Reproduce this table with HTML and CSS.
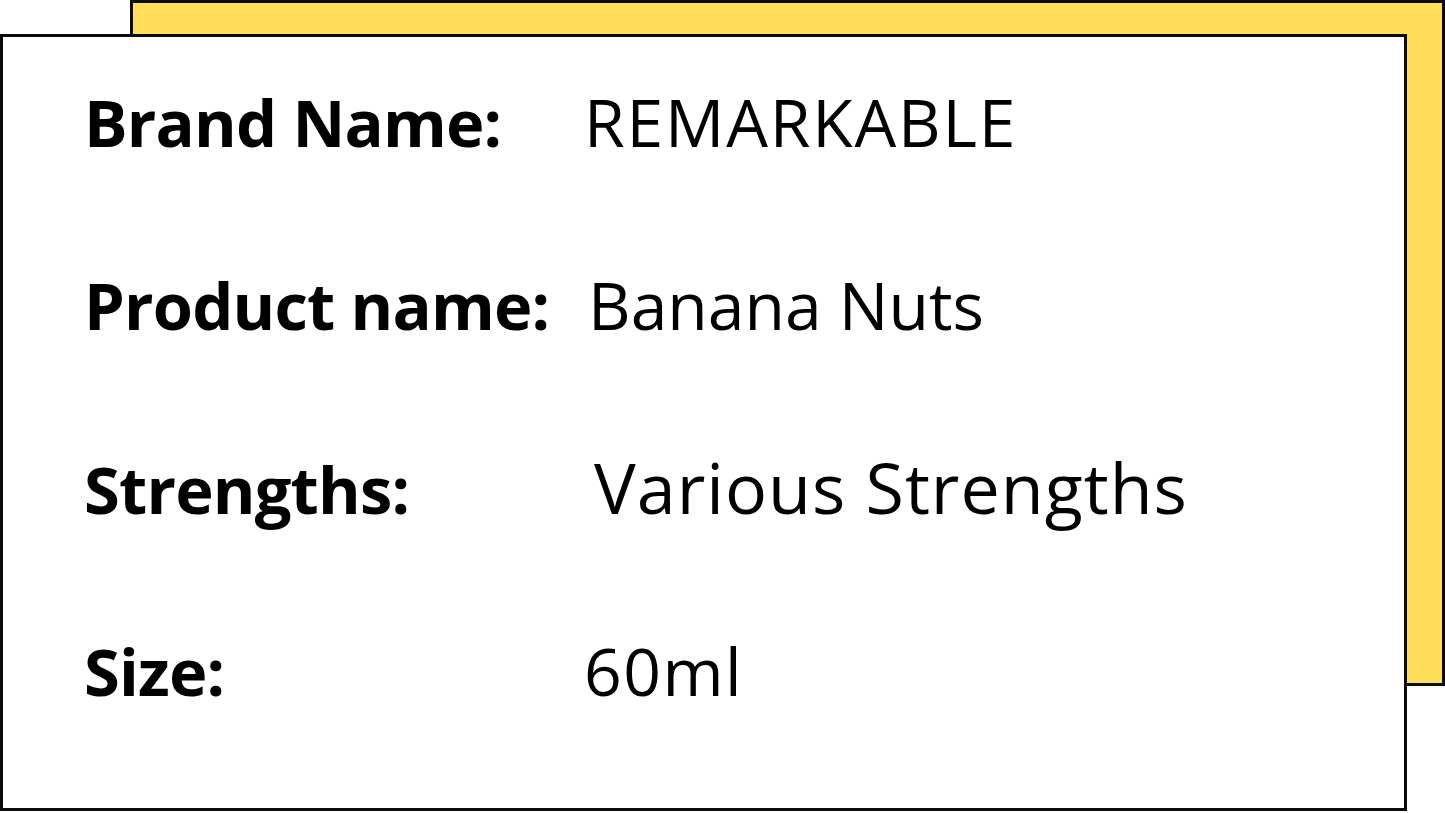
FILE: index.html
```html
<!DOCTYPE html>
<html>
<head>
<meta charset="utf-8">
<link rel="stylesheet" href="styles.css">
</head>
<body>
<div class="stage">
  <div class="backdrop"></div>
  <div class="card">
    <div class="label">Brand Name:</div>
    <div class="value value-caps">REMARKABLE</div>
    <div class="label">Product name:</div>
    <div class="value value-tight">Banana Nuts</div>
    <div class="label">Strengths:</div>
    <div class="value value-large">Various Strengths</div>
    <div class="label">Size:</div>
    <div class="value value-size">60ml</div>
  </div>
</div>
</body>
</html>
```

FILE: styles.css
```css
html, body {
  margin: 0;
  padding: 0;
  background: #ffffff;
}
body {
  width: 1445px;
  height: 813px;
  overflow: hidden;
  font-family: "Open Sans", "Noto Sans", sans-serif;
  color: #000;
}
.stage {
  position: relative;
  width: 1445px;
  height: 813px;
  padding-top: 34px;
  box-sizing: border-box;
}
.backdrop {
  position: absolute;
  left: 130px;
  top: 0;
  width: 1315px;
  height: 686px;
  box-sizing: border-box;
  background: #ffde59;
  border: 3px solid #0b0b0b;
}
.card {
  position: relative;
  width: 1407px;
  height: 777px;
  box-sizing: border-box;
  background: #ffffff;
  border: 3px solid #0b0b0b;
  display: grid;
  grid-template-columns: 500px 1fr;
  grid-template-rows: repeat(4, 183px);
  align-items: baseline;
  padding: 51px 0 0 81px;
}
.label {
  font-weight: 700;
  font-size: 65px;
  line-height: 66px;
  letter-spacing: -0.8px;
}
.value {
  font-weight: 400;
  font-size: 66px;
  line-height: 66px;
}
.value-caps {
  letter-spacing: 1.8px;
}
.value-tight {
  padding-left: 4px;
}
.value-large {
  font-size: 70px;
  padding-left: 10px;
  letter-spacing: 1px;
}
.value-size {
  letter-spacing: 1.5px;
}
```
